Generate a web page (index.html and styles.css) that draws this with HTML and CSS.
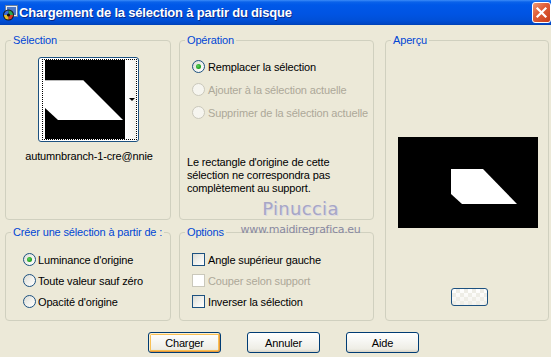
FILE: index.html
```html
<!DOCTYPE html>
<html lang="fr">
<head>
<meta charset="utf-8">
<title>Chargement de la sélection à partir du disque</title>
<link rel="stylesheet" href="styles.css">
</head>
<body>
<div class="window">
  <div class="titlebar">
    <svg class="app-icon" width="16" height="16" viewBox="0 0 16 16">
      <rect x="3.5" y="0.5" width="12" height="11" fill="#e8eef8" stroke="#6a7f9a"/>
      <rect x="5" y="2" width="9" height="8" fill="#4a78c8"/>
      <circle cx="6.5" cy="10" r="5.5" fill="#1a1a1a"/>
      <path d="M6.5 10 L6.5 5.5 A4.5 4.5 0 0 1 11 10 Z" fill="#2fa84a"/>
      <path d="M6.5 10 L11 10 A4.5 4.5 0 0 1 6.5 14.5 Z" fill="#d8362a"/>
      <path d="M6.5 10 L6.5 14.5 A4.5 4.5 0 0 1 2 10 Z" fill="#e8c02a"/>
      <path d="M6.5 10 L2 10 A4.5 4.5 0 0 1 6.5 5.5 Z" fill="#3a6ad8"/>
      <circle cx="6.5" cy="10" r="1.6" fill="#111"/>
    </svg>
    <span class="title">Chargement de la sélection à partir du disque</span>
    <div class="close">
      <svg width="13" height="13" viewBox="0 0 13 13">
        <path d="M2.5 2.5 L10.5 10.5 M10.5 2.5 L2.5 10.5" stroke="#fff" stroke-width="2.2" stroke-linecap="square"/>
      </svg>
    </div>
  </div>

  <div class="content">
    <div class="groups">
      <fieldset class="group g-sel">
        <legend>Sélection</legend>
        <div class="thumb-combo">
          <div class="thumb-focus">
            <svg class="thumb-img" width="80" height="79" viewBox="0 0 80 79">
              <rect width="80" height="79" fill="#000"/>
              <polygon points="0,20 38,20 78,60 13,60 0,48" fill="#fff"/>
              <line x1="0" y1="20.5" x2="38" y2="20.5" stroke="#bbb" stroke-width="1"/>
            </svg>
            <div class="thumb-drop"><span class="arrow"></span></div>
          </div>
        </div>
        <div class="thumb-label">autumnbranch-1-cre@nnie</div>
      </fieldset>

      <fieldset class="group g-op">
        <legend>Opération</legend>
        <div class="choices">
          <div class="choice"><span class="radio on"></span><span>Remplacer la sélection</span></div>
          <div class="choice disabled"><span class="radio"></span><span>Ajouter à la sélection actuelle</span></div>
          <div class="choice disabled"><span class="radio"></span><span>Supprimer de la sélection actuelle</span></div>
        </div>
        <p class="note">Le rectangle d'origine de cette<br>sélection ne correspondra pas<br>complètement au support.</p>
      </fieldset>

      <fieldset class="group g-prev">
        <legend>Aperçu</legend>
        <svg class="preview" width="140" height="91" viewBox="0 0 140 91">
          <rect width="140" height="91" fill="#000"/>
          <polygon points="53,32 85,32 119,67 64,67 53,57" fill="#fff"/>
        </svg>
        <div class="mini-btn"></div>
      </fieldset>

      <fieldset class="group g-src">
        <legend>Créer une sélection à partir de :</legend>
        <div class="choices">
          <div class="choice"><span class="radio on"></span><span>Luminance d'origine</span></div>
          <div class="choice"><span class="radio"></span><span>Toute valeur sauf zéro</span></div>
          <div class="choice"><span class="radio"></span><span>Opacité d'origine</span></div>
        </div>
      </fieldset>

      <fieldset class="group g-opt">
        <legend>Options</legend>
        <div class="choices">
          <div class="choice"><span class="check"></span><span>Angle supérieur gauche</span></div>
          <div class="choice disabled"><span class="check"></span><span>Couper selon support</span></div>
          <div class="choice"><span class="check"></span><span>Inverser la sélection</span></div>
        </div>
      </fieldset>
    </div>

    <div class="buttons">
      <button class="btn default">Charger</button>
      <button class="btn">Annuler</button>
      <button class="btn">Aide</button>
    </div>
  </div>

  <div class="watermark">
    <div class="wm-name">Pinuccia</div>
    <div class="wm-url">www.maidiregrafica.eu</div>
  </div>
</div>
</body>
</html>
```

FILE: styles.css
```css
html, body {
  margin: 0;
  padding: 0;
}

body {
  background: #ECE9D8;
  font-family: "Liberation Sans", Arial, sans-serif;
  font-size: 11px;
  letter-spacing: -0.15px;
  color: #000;
}

.window {
  position: relative;
  width: 551px;
  height: 357px;
  overflow: hidden;
  background: #ECE9D8;
}

/* ---------- title bar ---------- */
.titlebar {
  height: 25px;
  display: flex;
  align-items: center;
  background: linear-gradient(#3C8CF8 0px, #0A62EA 2px, #0058E8 5px, #0054E3 14px, #0050D8 20px, #0046C4 24px, #0040B0 25px);
  box-sizing: border-box;
  padding-left: 2px;
}

.app-icon {
  flex: none;
  margin-right: 1px;
  margin-top: 1px;
}

.title {
  color: #fff;
  font-family: "Liberation Sans", Arial, sans-serif;
  font-weight: bold;
  font-size: 13px;
  letter-spacing: -0.2px;
  text-shadow: 1px 1px 0 #0A2A8A;
  flex: 1;
  white-space: nowrap;
}

.close {
  flex: none;
  width: 19px;
  height: 21px;
  box-sizing: border-box;
  border: 1px solid #fff;
  border-radius: 3px;
  background: linear-gradient(135deg, #EE9A78 0%, #E0603A 40%, #C83C18 100%);
  display: flex;
  align-items: center;
  justify-content: center;
  margin-right: 0;
}

/* ---------- content ---------- */
.content {
  padding: 9px 0 0 5px;
}

.groups {
  display: grid;
  grid-template-columns: 166px 195px 167px;
  grid-template-rows: 186px 95px;
  column-gap: 8px;
  row-gap: 6px;
}

.group {
  margin: 0;
  padding: 0;
  min-width: 0;
  box-sizing: border-box;
  height: 100%;
  border: 1px solid #D0D0BF;
  border-radius: 4px;
}

.group legend {
  font-size: 11px;
  line-height: 13px;
  color: #0046D5;
  padding: 0 2px;
  margin-left: 5px;
}

.g-sel { grid-column: 1; grid-row: 1; display: flex; flex-direction: column; align-items: center; }
.g-op { grid-column: 2; grid-row: 1; }
.g-prev { grid-column: 3; grid-row: 1 / span 2; margin-left: 3px; }
.g-src { grid-column: 1; grid-row: 2; }
.g-opt { grid-column: 2; grid-row: 2; }

/* thumbnail combo */
.thumb-combo {
  margin-top: 10px;
  margin-left: 1px;
  border: 1px solid #1C5180;
  border-radius: 3px;
  background: #fff;
  padding: 1px 1px 1px 3px;
}

.thumb-focus {
  display: flex;
  border: 1px dotted #000;
  padding: 0 0 0 2px;
}

.thumb-img {
  display: block;
}

.thumb-drop {
  width: 11px;
  background: linear-gradient(90deg, #FFFFFF, #F4F3EE);
  display: flex;
  align-items: center;
  justify-content: flex-end;
}

.arrow {
  width: 0;
  height: 0;
  border-left: 3px solid transparent;
  border-right: 3px solid transparent;
  border-top: 3px solid #000;
  margin-right: 1px;
}

.thumb-label {
  margin-top: 8px;
  margin-left: 2px;
  white-space: nowrap;
}

/* choices */
.choices {
  display: flex;
  flex-direction: column;
  gap: 10px;
  padding-top: 13px;
  padding-left: 12px;
}

.g-src .choices {
  gap: 8px;
  padding-top: 14px;
  padding-left: 17px;
}

.g-opt .choices {
  gap: 8px;
  padding-top: 14px;
  padding-left: 12px;
}

.choice {
  display: flex;
  align-items: center;
  height: 13px;
  gap: 3px;
  white-space: nowrap;
}

.g-src .choice { gap: 2px; }

.choice.disabled {
  color: #ACA899;
}

.radio {
  flex: none;
  width: 13px;
  height: 13px;
  box-sizing: border-box;
  border-radius: 50%;
  border: 1px solid #1C5180;
  background: linear-gradient(135deg, #DCDCD4 0%, #F2F2EE 55%, #FFFFFF 100%);
  display: flex;
  align-items: center;
  justify-content: center;
}

.radio.on::after {
  content: "";
  width: 5px;
  height: 5px;
  border-radius: 50%;
  background: radial-gradient(circle at 40% 40%, #5FD35F, #21A121 60%, #1A8A1A);
}

.choice.disabled .radio {
  border-color: #CAC8BB;
  background: #F6F5EF;
}

.check {
  flex: none;
  width: 13px;
  height: 13px;
  box-sizing: border-box;
  border: 1px solid #1C5180;
  background: linear-gradient(135deg, #DCDCD4 0%, #F2F2EE 55%, #FFFFFF 100%);
}

.choice.disabled .check {
  border-color: #CAC8BB;
  background: #FFFFFF;
}

.note {
  margin: 37px 0 0 7px;
  line-height: 13px;
}

/* preview */
.preview {
  display: block;
  margin: 90px 0 0 12px;
}

.mini-btn {
  width: 37px;
  height: 18px;
  box-sizing: border-box;
  margin: 60px 0 0 65px;
  border: 1px solid #1C5180;
  border-radius: 3px;
  background:
    linear-gradient(45deg, #EEEDE6 25%, transparent 25%, transparent 75%, #EEEDE6 75%) 0 0 / 8px 8px,
    linear-gradient(45deg, #EEEDE6 25%, transparent 25%, transparent 75%, #EEEDE6 75%) 4px 4px / 8px 8px,
    linear-gradient(#FFFFFF, #F4F3EE);
}

/* buttons */
.buttons {
  display: flex;
  gap: 26px;
  margin-top: 11px;
  padding-left: 143px;
}

.btn {
  width: 73px;
  height: 21px;
  box-sizing: border-box;
  border: 1px solid #003C74;
  border-radius: 3px;
  background: linear-gradient(#FFFFFF 0%, #F7F7F4 40%, #EEEDE5 85%, #D8D3C6 100%);
  font-family: "Liberation Sans", Arial, sans-serif;
  font-size: 11px;
  letter-spacing: -0.15px;
  color: #000;
  padding: 0;
  margin: 0;
}

.btn.default {
  box-shadow: inset 1px 1px 0 #FFF0CF, inset -1px -1px 0 #E5973C, inset 0 0 0 2px #F8C055;
}

/* watermark overlay */
.watermark {
  position: absolute;
  left: 238px;
  top: 198px;
  width: 125px;
  text-align: center;
  pointer-events: none;
}

.wm-name {
  font-family: "DejaVu Sans", sans-serif;
  font-size: 18px;
  line-height: 22px;
  color: #A7A6C6;
  letter-spacing: 0.3px;
  text-shadow: 1px 1px 0 #D9D8E4;
}

.wm-url {
  font-family: "DejaVu Sans", sans-serif;
  font-size: 11px;
  line-height: 14px;
  color: #8888A0;
  letter-spacing: -0.3px;
  margin-top: 3px;
}
```
